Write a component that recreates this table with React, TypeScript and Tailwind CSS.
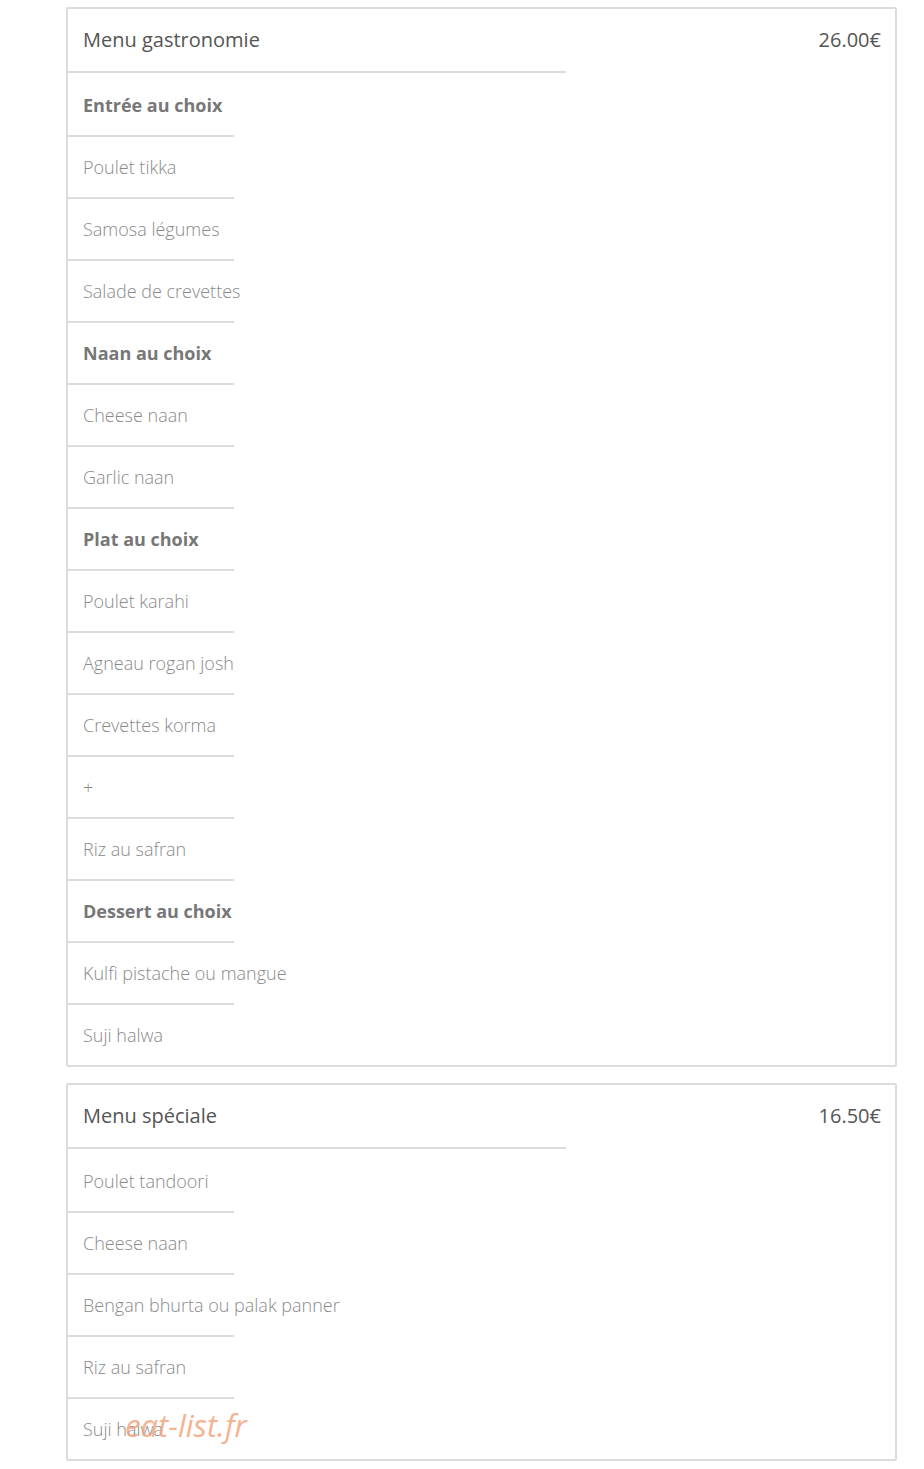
type Item = { label: string; bold?: boolean };

type Menu = { title: string; price: string; items: Item[] };

const menus: Menu[] = [
  {
    title: 'Menu gastronomie',
    price: '26.00€',
    items: [
      { label: 'Entrée au choix', bold: true },
      { label: 'Poulet tikka' },
      { label: 'Samosa légumes' },
      { label: 'Salade de crevettes' },
      { label: 'Naan au choix', bold: true },
      { label: 'Cheese naan' },
      { label: 'Garlic naan' },
      { label: 'Plat au choix', bold: true },
      { label: 'Poulet karahi' },
      { label: 'Agneau rogan josh' },
      { label: 'Crevettes korma' },
      { label: '+' },
      { label: 'Riz au safran' },
      { label: 'Dessert au choix', bold: true },
      { label: 'Kulfi pistache ou mangue' },
      { label: 'Suji halwa' },
    ],
  },
  {
    title: 'Menu spéciale',
    price: '16.50€',
    items: [
      { label: 'Poulet tandoori' },
      { label: 'Cheese naan' },
      { label: 'Bengan bhurta ou palak panner' },
      { label: 'Riz au safran' },
      { label: 'Suji halwa' },
    ],
  },
];

function MenuCard({ menu }: { menu: Menu }) {
  return (
    <div className="w-[831px] border-2 border-[#dcdcdc] rounded-[2px] bg-white">
      <div className="h-[62px] flex items-center justify-between pl-[15px] pr-[14px]">
        <span className="text-[20px] text-[#555]">{menu.title}</span>
        <span className="text-[20px] text-[#555]">{menu.price}</span>
      </div>
      <div className="w-[498px] h-[2px] bg-[#dcdcdc]" />
      <div className="pt-[2px]">
        {menu.items.map((item, i) => (
          <div key={i}>
            <div className="h-[60px] flex items-center pl-[15px] whitespace-nowrap">
              {item.bold ? (
                <span className="text-[18px] font-bold text-[#777]">{item.label}</span>
              ) : (
                <span className="text-[18px] font-light text-[#8a8a8a]">{item.label}</span>
              )}
            </div>
            {i < menu.items.length - 1 && <div className="w-[166px] h-[2px] bg-[#dcdcdc]" />}
          </div>
        ))}
      </div>
    </div>
  );
}

export default function App() {
  return (
    <div className="min-h-screen bg-white font-['Open_Sans',sans-serif] pl-[66px] pt-[7px] relative">
      <div className="flex flex-col gap-[16px]">
        {menus.map((m) => (
          <MenuCard key={m.title} menu={m} />
        ))}
      </div>
      <span className="absolute left-[125px] top-[1402px] text-[31px] italic text-[#f4a47c]/85 font-['Open_Sans',sans-serif]">
        eat-list.fr
      </span>
    </div>
  );
}
